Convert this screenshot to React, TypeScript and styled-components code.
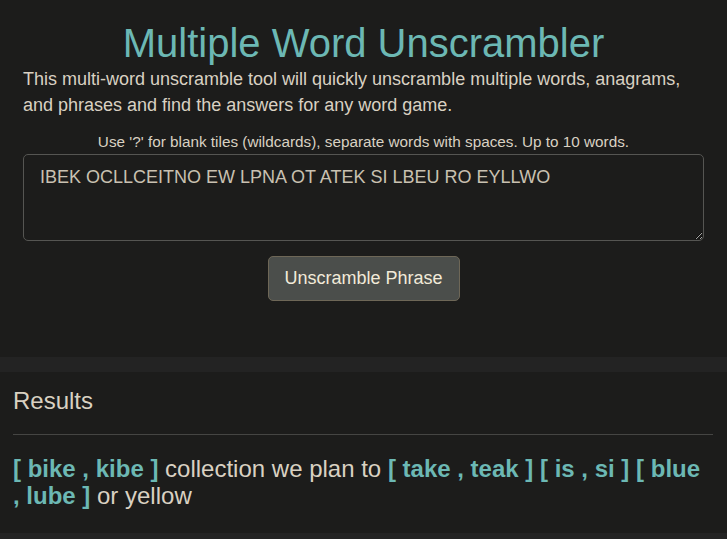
import styled, { createGlobalStyle } from "styled-components";

const GlobalStyle = createGlobalStyle`
  html, body {
    margin: 0;
    padding: 0;
    background: #232323;
    font-family: "Liberation Sans", Arial, sans-serif;
  }
`;

type part = {
  words?: string[];
  text?: string;
};

const result: part[] = [
  { words: ["bike", "kibe"] },
  { text: "collection we plan to" },
  { words: ["take", "teak"] },
  { words: ["is", "si"] },
  { words: ["blue", "lube"] },
  { text: "or yellow" },
];

const Page = styled.div`
  display: flex;
  flex-direction: column;
  gap: 15px;
`;

const Section = styled.section<{ $pad: string }>`
  background: #1c1c1b;
  padding: ${(p) => p.$pad};
`;

const Title = styled.h1`
  margin: 0;
  font-size: 40px;
  font-weight: normal;
  line-height: 46px;
  text-align: center;
  color: #6cb8b4;
`;

const Intro = styled.p`
  margin: 0;
  font-size: 18px;
  line-height: 26px;
  color: #d9d1c2;
`;

const Hint = styled.div`
  margin-top: 15px;
  font-size: 15.3px;
  line-height: 18px;
  text-align: center;
  color: #d9d1c2;
`;

const Input = styled.textarea`
  display: block;
  box-sizing: border-box;
  width: 100%;
  height: 87px;
  margin-top: 3px;
  padding: 10px 16px;
  background: #1c1c1b;
  border: 1px solid #555552;
  border-radius: 5px;
  color: #c9c1b1;
  font-family: "Liberation Sans", Arial, sans-serif;
  font-size: 18px;
  line-height: 25px;
  outline: none;
  resize: vertical;
`;

const Actions = styled.div`
  display: flex;
  justify-content: center;
  margin-top: 15px;
`;

const Button = styled.button`
  box-sizing: border-box;
  width: 192px;
  height: 45px;
  background: #4b4e4b;
  border: 1px solid #6e6757;
  border-radius: 5px;
  color: #f2ead9;
  font-family: "Liberation Sans", Arial, sans-serif;
  font-size: 18px;
`;

const Heading = styled.h2`
  margin: 0;
  font-size: 24px;
  font-weight: normal;
  line-height: 28px;
  color: #d9d1c2;
`;

const Rule = styled.hr`
  margin: 19px 0 20px;
  border: 0;
  border-top: 1px solid #454543;
`;

const Answer = styled.p`
  margin: 0;
  font-size: 24px;
  line-height: 27px;
  color: #d9d1c2;
`;

const Words = styled.b`
  color: #6cb8b4;
`;

export default function App() {
  return (
    <Page>
      <GlobalStyle />
      <Section $pad="20px 23px 56px">
        <Title>Multiple Word Unscrambler</Title>
        <Intro>
          This multi-word unscramble tool will quickly unscramble multiple words, anagrams,
          and phrases and find the answers for any word game.
        </Intro>
        <Hint>Use '?' for blank tiles (wildcards), separate words with spaces. Up to 10 words.</Hint>
        <Input defaultValue="IBEK OCLLCEITNO EW LPNA OT ATEK SI LBEU RO EYLLWO" />
        <Actions>
          <Button>Unscramble Phrase</Button>
        </Actions>
      </Section>
      <Section $pad="15px 14px 24px 13px">
        <Heading>Results</Heading>
        <Rule />
        <Answer>
          {result.map((item, i) => (
            <span key={i}>
              {item.words ? <Words>[ {item.words.join(" , ")} ]</Words> : item.text}{" "}
            </span>
          ))}
        </Answer>
      </Section>
    </Page>
  );
}
